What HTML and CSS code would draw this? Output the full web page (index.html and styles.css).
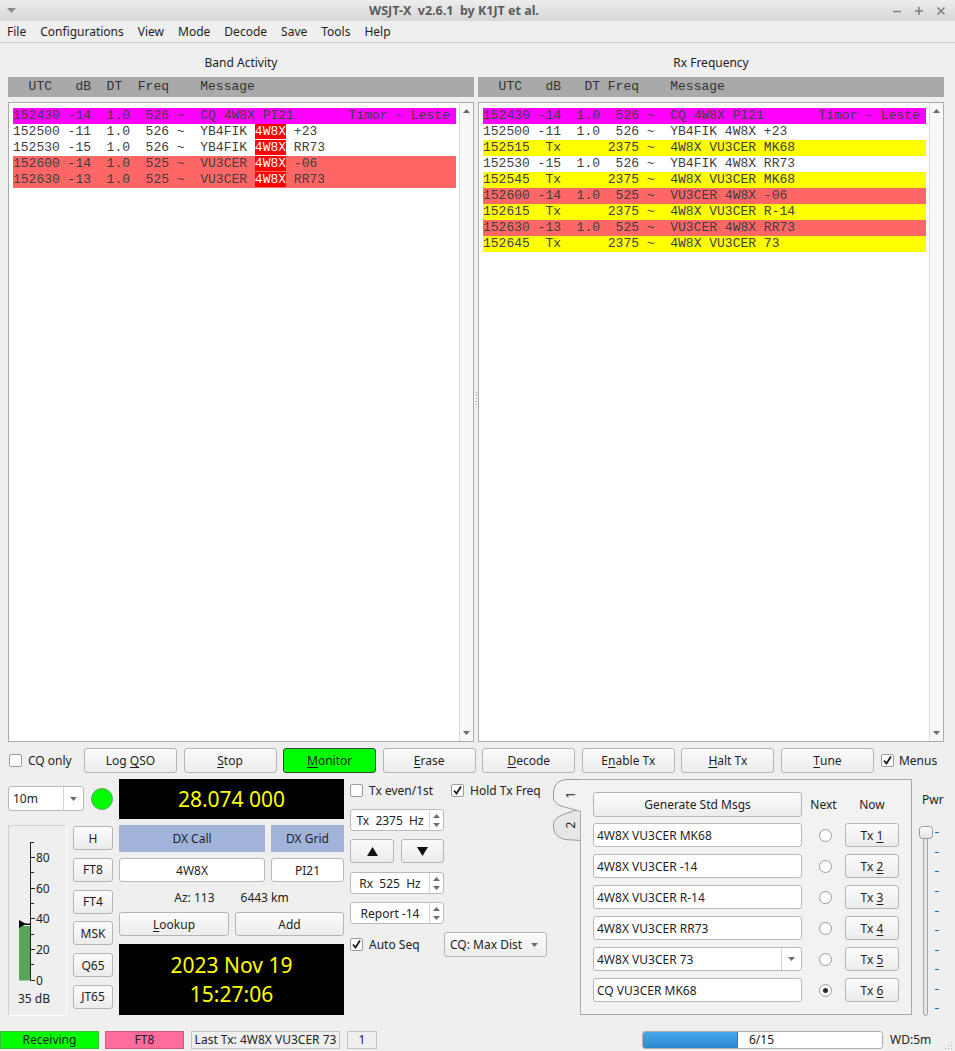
FILE: index.html
```html
<!DOCTYPE html>
<html lang="en">
<head>
<meta charset="utf-8">
<title>WSJT-X</title>
<link rel="stylesheet" href="styles.css">
</head>
<body>
<div class="titlebar">
  <div class="tb-left"><svg width="9" height="5" viewBox="0 0 9 5"><path d="M0 0H9L4.5 5Z" fill="#8c8c8c"/></svg></div>
  <div class="tb-title">WSJT-X&nbsp;&nbsp;v2.6.1&nbsp;&nbsp;by K1JT et al.</div>
  <div class="tb-btns">
    <span class="tb-btn"><svg width="10" height="10" viewBox="0 0 10 10"><path d="M1 5.5H9" stroke="#7d7d7d" stroke-width="1.5"/></svg></span>
    <span class="tb-btn"><svg width="10" height="10" viewBox="0 0 10 10"><path d="M1 5H9M5 1V9" stroke="#7d7d7d" stroke-width="1.5"/></svg></span>
    <span class="tb-btn"><svg width="10" height="10" viewBox="0 0 10 10"><path d="M1.5 1.5L8.5 8.5M8.5 1.5L1.5 8.5" stroke="#7d7d7d" stroke-width="1.5"/></svg></span>
  </div>
</div>
<div class="menubar">
  <span class="mi">File</span><span class="mi">Configurations</span><span class="mi">View</span><span class="mi">Mode</span><span class="mi">Decode</span><span class="mi">Save</span><span class="mi">Tools</span><span class="mi">Help</span>
</div>

<div class="panes">
  <section class="pane">
    <div class="pane-label">Band Activity</div>
    <div class="col-header">  UTC   dB  DT  Freq    Message</div>
    <div class="textbox">
      <div class="rows">
<div class="row r-cq">152430 -14  1.0  526 ~  CQ 4W8X PI21       Timor - Leste</div>
<div class="row">152500 -11  1.0  526 ~  YB4FIK <span class="hl">4W8X</span> +23</div>
<div class="row">152530 -15  1.0  526 ~  YB4FIK <span class="hl">4W8X</span> RR73</div>
<div class="row r-red">152600 -14  1.0  525 ~  VU3CER <span class="hl">4W8X</span> -06</div>
<div class="row r-red">152630 -13  1.0  525 ~  VU3CER <span class="hl">4W8X</span> RR73</div>
      </div>
      <div class="vscroll">
        <svg width="7" height="4" viewBox="0 0 7 4"><path d="M0 4H7L3.5 0Z" fill="#6b6b6b"/></svg>
        <svg width="7" height="4" viewBox="0 0 7 4"><path d="M0 0H7L3.5 4Z" fill="#6b6b6b"/></svg>
      </div>
    </div>
  </section>
  <div class="splitter"><svg width="3" height="16" viewBox="0 0 3 16"><g fill="#a0a0a0"><rect x="1" y="1" width="1" height="1"/><rect x="1" y="4" width="1" height="1"/><rect x="1" y="7" width="1" height="1"/><rect x="1" y="10" width="1" height="1"/><rect x="1" y="13" width="1" height="1"/></g></svg></div>
  <section class="pane">
    <div class="pane-label">Rx Frequency</div>
    <div class="col-header">  UTC   dB   DT Freq    Message</div>
    <div class="textbox">
      <div class="rows">
<div class="row r-cq">152430 -14  1.0  526 ~  CQ 4W8X PI21       Timor - Leste</div>
<div class="row">152500 -11  1.0  526 ~  YB4FIK 4W8X +23</div>
<div class="row r-tx">152515  Tx      2375 ~  4W8X VU3CER MK68</div>
<div class="row">152530 -15  1.0  526 ~  YB4FIK 4W8X RR73</div>
<div class="row r-tx">152545  Tx      2375 ~  4W8X VU3CER MK68</div>
<div class="row r-red">152600 -14  1.0  525 ~  VU3CER 4W8X -06</div>
<div class="row r-tx">152615  Tx      2375 ~  4W8X VU3CER R-14</div>
<div class="row r-red">152630 -13  1.0  525 ~  VU3CER 4W8X RR73</div>
<div class="row r-tx">152645  Tx      2375 ~  4W8X VU3CER 73</div>
      </div>
      <div class="vscroll">
        <svg width="7" height="4" viewBox="0 0 7 4"><path d="M0 4H7L3.5 0Z" fill="#6b6b6b"/></svg>
        <svg width="7" height="4" viewBox="0 0 7 4"><path d="M0 0H7L3.5 4Z" fill="#6b6b6b"/></svg>
      </div>
    </div>
  </section>
</div>

<div class="ctrlrow">
  <div class="chk cqonly"><span class="cb"></span><span>CQ only</span></div>
  <div class="btnrow">
    <div class="btn wide">Log <u>Q</u>SO</div>
    <div class="btn wide"><u>S</u>top</div>
    <div class="btn wide monitor"><u>M</u>onitor</div>
    <div class="btn wide"><u>E</u>rase</div>
    <div class="btn wide"><u>D</u>ecode</div>
    <div class="btn wide">E<u>n</u>able Tx</div>
    <div class="btn wide"><u>H</u>alt Tx</div>
    <div class="btn wide"><u>T</u>une</div>
  </div>
  <div class="chk menus"><span class="cb"><svg width="11" height="11" viewBox="0 0 11 11"><path d="M2 5.5L4.5 8.5L9 1.5" fill="none" stroke="#1a1a1a" stroke-width="1.8"/></svg></span><span>Menus</span></div>
</div>

<div class="lower">
  <div class="colA">
    <div class="bandrow">
      <div class="combo band"><span class="combo-text">10m</span><span class="combo-arrow"><svg width="7" height="4" viewBox="0 0 7 4"><path d="M0 0H7L3.5 4Z" fill="#6e6e6e"/></svg></span></div>
      <div class="led"></div>
    </div>
    <div class="meterrow">
      <div class="meter">
        <svg width="57" height="189" viewBox="0 0 57 189">
          <rect x="10" y="100" width="11" height="54.5" fill="#5aa55a"/>
          <path d="M21.5 16V154.5" stroke="#222" stroke-width="1"/>
          <path d="M21.5 16.5H25M21.5 31.5H26M21.5 46.5H25M21.5 62.5H26M21.5 77.5H25M21.5 92.5H26M21.5 108.5H25M21.5 123.5H26M21.5 138.5H25M21.5 154.5H26" stroke="#222" stroke-width="1"/>
          <g font-family="Noto Sans, sans-serif" font-size="12" fill="#222" dominant-baseline="central">
            <text x="27" y="31.5">80</text>
            <text x="27" y="62.5">60</text>
            <text x="27" y="92.5">40</text>
            <text x="27" y="123.5">20</text>
            <text x="27" y="154.5">0</text>
          </g>
          <path d="M10 94V102L17 98Z" fill="#000"/>
          <path d="M16 97.5H21.5V99H16Z" fill="#000"/>
          <text x="25" y="172" text-anchor="middle" dominant-baseline="central" font-family="Noto Sans, sans-serif" font-size="12" fill="#222">35 dB</text>
        </svg>
      </div>
      <div class="modes">
        <div class="btn mbtn">H</div>
        <div class="btn mbtn">FT8</div>
        <div class="btn mbtn">FT4</div>
        <div class="btn mbtn">MSK</div>
        <div class="btn mbtn">Q65</div>
        <div class="btn mbtn">JT65</div>
      </div>
    </div>
  </div>

  <div class="colB">
    <div class="freq">28.074 000</div>
    <div class="dxlabels"><div class="dxl dxcall">DX Call</div><div class="dxl dxgrid">DX Grid</div></div>
    <div class="dxinputs"><div class="input center dxcall">4W8X</div><div class="input center dxgrid">PI21</div></div>
    <div class="azrow"><span>Az: 113</span><span>6443 km</span></div>
    <div class="lookrow"><div class="btn lookup"><u>L</u>ookup</div><div class="btn add">Add</div></div>
    <div class="datetime"><div>2023 Nov 19</div><div>15:27:06</div></div>
  </div>

  <div class="colC">
    <div class="c-row1">
      <div class="chk txeven"><span class="cb"></span><span>Tx even/1st</span></div>
      <div class="chk"><span class="cb"><svg width="11" height="11" viewBox="0 0 11 11"><path d="M2 5.5L4.5 8.5L9 1.5" fill="none" stroke="#1a1a1a" stroke-width="1.8"/></svg></span><span>Hold Tx Freq</span></div>
    </div>
    <div class="spin sp-tx"><span class="spin-text">Tx  2375  Hz</span><span class="spin-btns"><svg width="7" height="4" viewBox="0 0 7 4"><path d="M0 4H7L3.5 0Z" fill="#6e6e6e"/></svg><svg width="7" height="4" viewBox="0 0 7 4"><path d="M0 0H7L3.5 4Z" fill="#6e6e6e"/></svg></span></div>
    <div class="updown">
      <div class="btn ud-up"><svg width="11" height="9" viewBox="0 0 11 9"><path d="M0 9H11L5.5 0Z" fill="#111"/></svg></div>
      <div class="btn ud-down"><svg width="11" height="9" viewBox="0 0 11 9"><path d="M0 0H11L5.5 9Z" fill="#111"/></svg></div>
    </div>
    <div class="spin sp-rx"><span class="spin-text">Rx  525  Hz</span><span class="spin-btns"><svg width="7" height="4" viewBox="0 0 7 4"><path d="M0 4H7L3.5 0Z" fill="#6e6e6e"/></svg><svg width="7" height="4" viewBox="0 0 7 4"><path d="M0 0H7L3.5 4Z" fill="#6e6e6e"/></svg></span></div>
    <div class="spin sp-rep"><span class="spin-text">Report -14</span><span class="spin-btns"><svg width="7" height="4" viewBox="0 0 7 4"><path d="M0 4H7L3.5 0Z" fill="#6e6e6e"/></svg><svg width="7" height="4" viewBox="0 0 7 4"><path d="M0 0H7L3.5 4Z" fill="#6e6e6e"/></svg></span></div>
    <div class="c-row-last">
      <div class="chk autoseq"><span class="cb"><svg width="11" height="11" viewBox="0 0 11 11"><path d="M2 5.5L4.5 8.5L9 1.5" fill="none" stroke="#1a1a1a" stroke-width="1.8"/></svg></span><span>Auto Seq</span></div>
      <div class="btn cqcombo"><span>CQ: Max Dist</span><svg width="7" height="4" viewBox="0 0 7 4"><path d="M0 0H7L3.5 4Z" fill="#6e6e6e"/></svg></div>
    </div>
  </div>

  <div class="colD">
    <svg class="tabs" width="28" height="63" viewBox="0 0 28 63">
      <path d="M28 29.5L10 35.5Q1 39 0.5 45V49Q1.5 58 12 60.5L28 61.5" fill="#e6e6e6" stroke="#9a9a9a"/>
      <path d="M27.5 31V63" stroke="#aaaaaa"/>
      <path d="M28 0.5H14Q2 1 0.5 12V19Q1 24 8 27L28 32.5" fill="#f2f2f2" stroke="#9a9a9a"/>
      <g font-family="Noto Sans, sans-serif" font-size="12" fill="#222" text-anchor="middle" dominant-baseline="central">
        <text x="17" y="16" transform="rotate(-90 17 16)">1</text>
        <text x="17" y="46" transform="rotate(-90 17 46)">2</text>
      </g>
    </svg>
    <div class="txframe">
      <div class="txgrid">
        <div class="btn gen">Generate Std Msgs</div><div class="hdr">Next</div><div class="hdr">Now</div>
        <div class="input msg">4W8X VU3CER MK68</div><div class="rcell"><span class="radio"></span></div><div class="btn txb">Tx <u>1</u></div>
        <div class="input msg">4W8X VU3CER -14</div><div class="rcell"><span class="radio"></span></div><div class="btn txb">Tx <u>2</u></div>
        <div class="input msg">4W8X VU3CER R-14</div><div class="rcell"><span class="radio"></span></div><div class="btn txb">Tx <u>3</u></div>
        <div class="input msg">4W8X VU3CER RR73</div><div class="rcell"><span class="radio"></span></div><div class="btn txb">Tx <u>4</u></div>
        <div class="input msg msgcombo"><span class="combo-text">4W8X VU3CER 73</span><span class="combo-arrow"><svg width="7" height="4" viewBox="0 0 7 4"><path d="M0 0H7L3.5 4Z" fill="#6e6e6e"/></svg></span></div><div class="rcell"><span class="radio"></span></div><div class="btn txb">Tx <u>5</u></div>
        <div class="input msg">CQ VU3CER MK68</div><div class="rcell"><span class="radio on"></span></div><div class="btn txb">Tx <u>6</u></div>
      </div>
    </div>
  </div>

  <div class="colE">
    <div class="pwr">Pwr</div>
    <svg class="slider" width="26" height="195" viewBox="0 0 26 195">
      <rect x="6.5" y="12.5" width="4" height="180" rx="2" fill="#e4e4e4" stroke="#a8a8a8"/>
      <defs><linearGradient id="hg" x1="0" y1="0" x2="0" y2="1"><stop offset="0" stop-color="#fdfdfd"/><stop offset="1" stop-color="#e2e2e2"/></linearGradient></defs>
      <rect x="2.5" y="3.5" width="13" height="12" rx="3" fill="url(#hg)" stroke="#999"/>
      <path d="M18 9.5H22M18 29.5H22M18 48.5H22M18 68.5H22M18 88.5H22M18 107.5H22M18 127.5H22M18 146.5H22M18 166.5H22M18 185.5H22" stroke="#2f6fa8" stroke-width="1"/>
    </svg>
  </div>
</div>

<div class="status">
  <div class="sb receiving">Receiving</div>
  <div class="sb ft8">FT8</div>
  <div class="sb lasttx">Last Tx: 4W8X VU3CER 73</div>
  <div class="sb one">1</div>
  <div class="spacer"></div>
  <div class="prog"><div class="chunk"></div><div class="prog-rest">6/15</div></div>
  <div class="wd">WD:5m</div>
  <svg class="grip" width="10" height="10" viewBox="0 0 10 10"><g fill="#b8b8b8"><rect x="8" y="2" width="1" height="1"/><rect x="5" y="5" width="1" height="1"/><rect x="8" y="5" width="1" height="1"/><rect x="2" y="8" width="1" height="1"/><rect x="5" y="8" width="1" height="1"/><rect x="8" y="8" width="1" height="1"/></g></svg>
</div>
</body>
</html>
```

FILE: styles.css
```css
* { box-sizing: border-box; }
html, body { margin: 0; padding: 0; }
body {
  width: 955px;
  height: 1051px;
  overflow: hidden;
  background: #efefef;
  font-family: "Noto Sans", "Open Sans", sans-serif;
  font-size: 12px;
  color: #232323;
}
u { text-decoration: underline; text-underline-offset: 2px; }

/* title bar */
.titlebar {
  height: 21px;
  display: flex;
  align-items: center;
  background: linear-gradient(#ededed, #d6d6d6);
}
.tb-left { width: 22px; display: flex; justify-content: center; }
.tb-left svg { display: block; }
.tb-title {
  flex: 1;
  text-align: center;
  font-weight: bold;
  font-size: 12.5px;
  color: #5c5c5c;
  white-space: nowrap;
}
.tb-btns { display: flex; width: 69px; padding-right: 3px; }
.tb-btn { width: 22px; height: 21px; display: flex; align-items: center; justify-content: center; }

/* menu bar */
.menubar {
  height: 22px;
  border-bottom: 1px solid #d2d2d2;
  display: flex;
  align-items: center;
}
.mi { padding: 0 7px; line-height: 21px; color: #1e1e1e; }

/* panes */
.panes { display: flex; padding-left: 8px; }
.pane { width: 466px; }
.splitter {
  width: 4px;
  display: flex;
  align-items: center;
  justify-content: center;
  padding-top: 13px;
}
.pane-label {
  height: 34px;
  padding-top: 11px;
  line-height: 17px;
  text-align: center;
}
.col-header {
  height: 20px;
  line-height: 20px;
  background: #a9a9a9;
  padding-left: 5px;
  font-family: "Liberation Mono", "Courier New", monospace;
  font-size: 13px;
  white-space: pre;
  color: #333;
}
.textbox {
  margin-top: 5px;
  height: 640px;
  border: 1px solid #ababab;
  background: #fff;
  display: flex;
}
.rows { flex: 1; padding: 5px 3px 0 4px; }
.row {
  height: 16px;
  line-height: 16px;
  white-space: pre;
  font-family: "Liberation Mono", "Courier New", monospace;
  font-size: 13px;
  color: #404040;
  overflow: hidden;
}
.r-cq { background: #ff00ff; }
.r-red { background: #ff6666; }
.r-tx { background: #ffff00; }
.hl { background: #ff0000; color: #fff; }
.vscroll {
  width: 14px;
  background: #f7f7f7;
  border-left: 1px solid #dadada;
  display: flex;
  flex-direction: column;
  justify-content: space-between;
  align-items: center;
  padding: 6px 0;
}
.vscroll svg { display: block; }

/* generic widgets */
.btn {
  display: flex;
  align-items: center;
  justify-content: center;
  height: 25px;
  border: 1px solid #b5b5b5;
  border-radius: 3px;
  background: linear-gradient(#fbfbfb, #ececec);
  color: #1f1f1f;
  white-space: pre;
}
.input {
  background: #fff;
  border: 1px solid #b9b9b9;
  border-radius: 3px;
  display: flex;
  align-items: center;
  padding-left: 3px;
  color: #1f1f1f;
}
.input.center { justify-content: center; padding-left: 0; }
.chk { display: flex; align-items: center; gap: 6px; }
.cb {
  width: 13px;
  height: 13px;
  border: 1px solid #9c9c9c;
  border-radius: 2px;
  background: #fff;
  flex: none;
  display: flex;
  align-items: center;
  justify-content: center;
}
.cb svg { display: block; }

/* control row */
.ctrlrow {
  display: flex;
  align-items: center;
  height: 25px;
  margin-top: 6px;
  padding-left: 9px;
}
.cqonly { width: 75px; }
.btnrow { display: flex; gap: 6.57px; }
.wide { width: 93px; }
.monitor { background: #00ff00; border-color: #2e4a2e; }
.menus { margin-left: 7px; gap: 5px; }

/* lower area */
.lower {
  display: flex;
  margin-top: 7px;
  padding-left: 8px;
  height: 236px;
}
.colA { width: 105px; }
.bandrow { display: flex; gap: 7px; margin-top: 6px; height: 25px; align-items: center; }
.combo {
  display: flex;
  background: #fff;
  border: 1px solid #b8b8b8;
  border-radius: 3px;
}
.band { width: 76px; height: 25px; }
.combo-text { flex: 1; display: flex; align-items: center; padding-left: 4px; }
.combo-arrow {
  width: 20px;
  border-left: 1px solid #d6d6d6;
  display: flex;
  align-items: center;
  justify-content: center;
}
.led {
  width: 22px;
  height: 22px;
  border-radius: 50%;
  background: #00ff00;
  border: 1px solid #5aa85a;
}
.meterrow { display: flex; gap: 6px; margin-top: 14px; }
.meter {
  width: 59px;
  height: 191px;
  border: 1px solid;
  border-color: #d2d2d2 #ffffff #ffffff #d2d2d2;
}
.meter svg { display: block; }
.modes { width: 40px; display: flex; flex-direction: column; gap: 7.8px; padding-top: 1px; }
.mbtn { height: 24px; }

.colB { width: 225px; margin-left: 6px; }
.freq {
  height: 40px;
  margin-top: -1px;
  background: #000;
  color: #ffff00;
  font-size: 21px;
  line-height: 40px;
  text-align: center;
}
.dxlabels { display: flex; gap: 6px; margin-top: 6px; height: 27px; }
.dxl { background: #a1b3d9; display: flex; align-items: center; justify-content: center; color: #1f1f1f; }
.dxcall { width: 146px; }
.dxgrid { width: 73px; }
.dxinputs { display: flex; gap: 6px; margin-top: 6px; height: 24px; }
.azrow { height: 30px; display: flex; justify-content: center; align-items: center; gap: 26px; }
.lookrow { display: flex; gap: 6px; }
.lookup { width: 110px; height: 24px; }
.add { width: 109px; height: 24px; }
.datetime {
  margin-top: 8px;
  height: 71px;
  background: #000;
  color: #ffff00;
  font-size: 21px;
  line-height: 29px;
  text-align: center;
  padding-top: 6.5px;
}

.colC { width: 197px; margin-left: 6px; display: flex; flex-direction: column; }
.c-row1 { height: 21px; display: flex; align-items: center; }
.txeven { width: 101px; }
.spin {
  width: 94px;
  height: 22px;
  display: flex;
  background: #fff;
  border: 1px solid #b9b9b9;
  border-radius: 3px;
}
.spin-text { flex: 1; display: flex; align-items: center; justify-content: center; white-space: pre; }
.spin-btns {
  width: 14px;
  border-left: 1px solid #d6d6d6;
  display: flex;
  flex-direction: column;
  align-items: center;
  justify-content: center;
  gap: 5px;
}
.spin-btns svg { display: block; }
.sp-tx { margin-top: 8px; }
.updown { display: flex; gap: 7px; margin-top: 8px; }
.ud-up { width: 44px; height: 24px; }
.ud-down { width: 43px; height: 24px; }
.sp-rx { margin-top: 9px; }
.sp-rep { margin-top: 8px; }
.c-row-last { display: flex; align-items: center; height: 25px; margin-top: 8px; }
.autoseq { width: 94px; }
.cqcombo { width: 103px; justify-content: space-between; padding: 0 8px 0 5px; }

.colD { margin-left: 6px; margin-top: -1px; display: flex; align-items: flex-start; }
.tabs { display: block; margin-right: -1px; position: relative; z-index: 1; flex: none; }
.txframe {
  width: 332px;
  height: 236px;
  border: 1px solid #aaaaaa;
  background: #f2f2f2;
  padding: 12px 0 0 12px;
}
.txgrid {
  display: grid;
  grid-template-columns: 209px 43px 54px;
  grid-template-rows: repeat(7, 24px);
  row-gap: 7px;
}
.gen { height: 25px; }
.hdr { display: flex; align-items: center; justify-content: center; }
.msg { height: 24px; }
.msgcombo { padding-left: 0; align-items: stretch; }
.msgcombo .combo-text { padding-left: 3px; }
.rcell { display: flex; align-items: center; padding-left: 17px; }
.radio {
  width: 13px;
  height: 13px;
  border-radius: 50%;
  border: 1px solid #9c9c9c;
  background: #fff;
  display: flex;
  align-items: center;
  justify-content: center;
}
.radio.on::after {
  content: "";
  width: 5px;
  height: 5px;
  border-radius: 50%;
  background: #2a2a2a;
}
.txb { height: 24px; }

.colE { width: 43px; }
.pwr { margin-top: 11px; line-height: 17px; padding-left: 10px; }
.slider { display: block; margin-top: 15px; margin-left: 5px; }

/* status bar */
.status { display: flex; align-items: center; height: 23px; margin-top: 12px; }
.sb { height: 18px; display: flex; align-items: center; justify-content: center; }
.receiving { width: 99px; background: #00ff00; border: 1px solid #35c035; }
.ft8 { width: 79px; margin-left: 6px; background: #ff6b9b; border: 1px solid #c95b82; }
.lasttx { width: 149px; margin-left: 7px; border: 1px solid #c4c4c4; }
.one { width: 30px; margin-left: 7px; border: 1px solid #c4c4c4; }
.spacer { flex: 1; }
.prog {
  width: 241px;
  height: 18px;
  border: 1px solid #b0b0b0;
  border-radius: 3px;
  background: #fff;
  display: flex;
  overflow: hidden;
}
.chunk { width: 95px; background: linear-gradient(#45a7ea, #2d88cf); border-right: 1px solid #2b78b8; }
.prog-rest { flex: 1; display: flex; align-items: center; padding-left: 11px; }
.wd { margin-left: 7px; width: 53px; }
.grip { display: block; margin-top: 10px; margin-right: 2px; }
```
